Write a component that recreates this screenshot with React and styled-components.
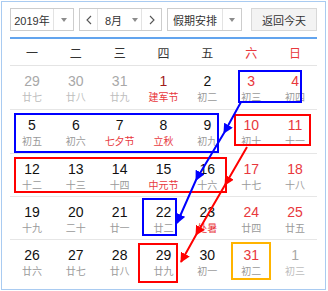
import React from "react";
import styled, { createGlobalStyle, css } from "styled-components";

const GlobalStyle = createGlobalStyle`
  html, body {
    margin: 0;
    padding: 0;
    background: #fff;
  }
  body {
    font-family: "Liberation Sans", "Noto Sans CJK SC", sans-serif;
  }
`;

const Page = styled.div`
  position: relative;
  width: 328px;
  height: 291px;
  padding: 1px;
  box-sizing: border-box;
`;

const Frame = styled.div`
  box-sizing: border-box;
  width: 325px;
  height: 289px;
  border: 1px solid #a9cbf1;
  padding: 6px 8px 0 8px;
`;

const Toolbar = styled.div`
  display: flex;
  align-items: center;
  gap: 5px;
  height: 23px;
`;

const SelectBox = styled.div`
  box-sizing: border-box;
  display: flex;
  align-items: stretch;
  width: ${(p) => p.$w}px;
  height: 23px;
  border: 1px solid #cdcdcd;
  background: #fff;
  font-size: 11px;
  color: #333;
`;

const SelectLabel = styled.div`
  flex: 1;
  display: flex;
  align-items: center;
  justify-content: center;
`;

const ArrowCell = styled.div`
  width: ${(p) => p.$w || 18}px;
  display: flex;
  align-items: center;
  justify-content: center;
  border-left: ${(p) => (p.$plain ? "none" : "1px solid #e3e3e3")};

  &::after {
    content: "";
    border-left: 3.5px solid transparent;
    border-right: 3.5px solid transparent;
    border-top: 4px solid #8c8c8c;
  }
`;

const NavCell = styled.div`
  width: ${(p) => p.$w}px;
  display: flex;
  align-items: center;
  justify-content: center;
  border-left: ${(p) => (p.$right ? "1px solid #e3e3e3" : "none")};
  border-right: ${(p) => (p.$right ? "none" : "1px solid #e3e3e3")};
`;

const TodayButton = styled.div`
  box-sizing: border-box;
  margin-left: auto;
  width: 66px;
  height: 23px;
  display: flex;
  align-items: center;
  justify-content: center;
  border: 1px solid #d8d8d8;
  background: #f3f3f3;
  font-size: 11px;
  color: #333;
`;

const WeekHeader = styled.div`
  display: grid;
  grid-template-columns: repeat(7, 1fr);
  margin-top: 6px;
  height: 26px;
  border-top: 2px solid #62a4ee;
  border-bottom: 1px solid #e4e4e4;
`;

const WeekDay = styled.div`
  display: flex;
  align-items: center;
  justify-content: center;
  font-size: 12px;
  color: ${(p) => (p.$weekend ? "#e8383d" : "#333")};
`;

const WeekRow = styled.div`
  display: grid;
  grid-template-columns: repeat(7, 1fr);
  height: 43.3px;
  border-top: ${(p) => (p.$first ? "none" : "1px solid #e6e6e6")};
  box-sizing: border-box;
`;

const DayCell = styled.div`
  display: flex;
  flex-direction: column;
  align-items: center;
  justify-content: flex-start;
  padding-top: 7px;
  gap: 2px;
  ${(p) =>
    p.$today &&
    css`
      outline: 2px solid #ffb400;
      outline-offset: -4px;
    `}
`;

const DayNum = styled.div`
  font-size: 14px;
  line-height: 17px;
  color: ${(p) =>
    p.$muted ? "#a8a8a8" : p.$weekend ? "#e8383d" : p.$holiday ? "#a11b1b" : "#111"};
`;

const Lunar = styled.div`
  font-size: 10px;
  line-height: 12px;
  color: ${(p) => (p.$muted ? "#bdbdbd" : p.$festival ? "#e8383d" : "#9a9a9a")};
`;

const Overlay = styled.svg`
  position: absolute;
  top: 0;
  left: 0;
  pointer-events: none;
`;

const Chevron = ({ dir }) => (
  <svg width="6" height="10" viewBox="0 0 6 10">
    <polyline
      points={dir === "left" ? "5,1 1,5 5,9" : "1,1 5,5 1,9"}
      fill="none"
      stroke="#555"
      strokeWidth="1.1"
    />
  </svg>
);

const weekdays = ["一", "二", "三", "四", "五", "六", "日"];

// [day, lunar, flags]  m = other month, f = festival, h = holiday, t = today
const weeks = [
  [[29, "廿七", "m"], [30, "廿八", "m"], [31, "廿九", "m"], [1, "建军节", "fh"], [2, "初二"], [3, "初三"], [4, "初四"]],
  [[5, "初五"], [6, "初六"], [7, "七夕节", "f"], [8, "立秋", "f"], [9, "初九"], [10, "初十"], [11, "十一"]],
  [[12, "十二"], [13, "十三"], [14, "十四"], [15, "中元节", "f"], [16, "十六"], [17, "十七"], [18, "十八"]],
  [[19, "十九"], [20, "二十"], [21, "廿一"], [22, "廿二"], [23, "处暑", "f"], [24, "廿四"], [25, "廿五"]],
  [[26, "廿六"], [27, "廿七"], [28, "廿八"], [29, "廿九"], [30, "初一"], [31, "初二", "t"], [1, "初三", "m"]],
];

const App = () => {
  return (
    <Page>
      <GlobalStyle />
      <Frame>
        <Toolbar>
          <SelectBox $w={64}>
            <SelectLabel>2019年</SelectLabel>
            <ArrowCell $w={19} />
          </SelectBox>
          <SelectBox $w={83}>
            <NavCell $w={17}>
              <Chevron dir="left" />
            </NavCell>
            <SelectLabel>8月</SelectLabel>
            <ArrowCell $w={12} $plain />
            <NavCell $w={19} $right>
              <Chevron dir="right" />
            </NavCell>
          </SelectBox>
          <SelectBox $w={75}>
            <SelectLabel>假期安排</SelectLabel>
            <ArrowCell $w={18} />
          </SelectBox>
          <TodayButton>返回今天</TodayButton>
        </Toolbar>

        <WeekHeader>
          {weekdays.map((d, i) => (
            <WeekDay key={d} $weekend={i >= 5}>
              {d}
            </WeekDay>
          ))}
        </WeekHeader>

        {weeks.map((week, wi) => (
          <WeekRow key={wi} $first={wi === 0}>
            {week.map(([day, lunar, flags = ""], di) => {
              const muted = flags.includes("m");
              return (
                <DayCell key={di} $today={flags.includes("t")}>
                  <DayNum $muted={muted} $weekend={di >= 5} $holiday={flags.includes("h")}>
                    {day}
                  </DayNum>
                  <Lunar $muted={muted} $festival={flags.includes("f")}>
                    {lunar}
                  </Lunar>
                </DayCell>
              );
            })}
          </WeekRow>
        ))}
      </Frame>

      {/* hand-drawn annotations over the calendar */}
      <Overlay width="328" height="291" viewBox="0 0 328 291">
        <defs>
          <marker id="headBlue" viewBox="0 0 10 10" refX="9" refY="5" markerWidth="5" markerHeight="5" orient="auto">
            <path d="M0,0 L10,5 L0,10 z" fill="#0000ff" />
          </marker>
          <marker id="headRed" viewBox="0 0 10 10" refX="9" refY="5" markerWidth="5" markerHeight="5" orient="auto">
            <path d="M0,0 L10,5 L0,10 z" fill="#ff0000" />
          </marker>
        </defs>
        <g fill="none" strokeWidth="2">
          <rect x="239" y="71" width="62" height="31" stroke="#0000ff" />
          <rect x="15" y="114" width="203" height="38" stroke="#0000ff" />
          <rect x="143" y="199" width="33" height="36" stroke="#0000ff" />
          <rect x="235" y="115" width="75" height="30" stroke="#ff0000" />
          <rect x="15" y="158" width="211" height="34" stroke="#ff0000" />
          <rect x="139" y="244" width="38" height="38" stroke="#ff0000" />
          <polyline
            points="241,102 224,133 196,180 177,223"
            stroke="#0000ff"
            markerMid="url(#headBlue)"
            markerEnd="url(#headBlue)"
          />
          <polyline
            points="247,147 225,185 196,235 181,262"
            stroke="#ff0000"
            markerMid="url(#headRed)"
            markerEnd="url(#headRed)"
          />
        </g>
      </Overlay>
    </Page>
  );
};

export default App;
